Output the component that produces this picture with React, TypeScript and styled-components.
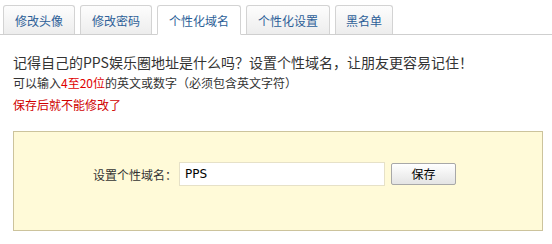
import React from "react";
import styled, { createGlobalStyle } from "styled-components";

const Global = createGlobalStyle`
  html, body { margin: 0; padding: 0; background: #fff; }
  body { font-family: "Noto Sans CJK SC", "Noto Sans", sans-serif; font-size: 12px; color: #333; }
`;

const Page = styled.div`
  width: 552px;
  height: 244px;
  overflow: hidden;
`;

const TabBar = styled.div`
  display: flex;
  align-items: flex-end;
  height: 34px;
  padding-left: 3px;
  border-bottom: 1px solid #cfcfcf;
`;

const Tab = styled.div<{ $active?: boolean; $pad?: number }>`
  box-sizing: border-box;
  height: ${(p) => (p.$active ? "30px" : "29px")};
  margin-right: 5px;
  margin-bottom: ${(p) => (p.$active ? "-1px" : "0")};
  padding: 1px ${(p) => p.$pad ?? 11}px 0;
  display: flex;
  align-items: center;
  border: 1px solid #d3d3d3;
  border-bottom: ${(p) => (p.$active ? "1px solid #fff" : "none")};
  border-radius: 3px 3px 0 0;
  background: ${(p) =>
    p.$active ? "#fff" : "linear-gradient(#fdfdfd, #ededed)"};
  color: #2d5f98;
  font-size: 12px;
  line-height: 14px;
  white-space: nowrap;
`;

const Content = styled.div`
  padding: 17px 0 0 13px;
`;

const Lead = styled.div`
  font-size: 14px;
  line-height: 20px;
  color: #333;
`;

const Hint = styled.div`
  margin-top: 1px;
  font-size: 12px;
  line-height: 20px;
  color: #333;
`;

const Red = styled.span`
  color: #e00000;
`;

const Warn = styled.div`
  margin-top: 2px;
  font-size: 12px;
  line-height: 20px;
  color: #d00000;
`;

const Panel = styled.div`
  box-sizing: border-box;
  margin-top: 16px;
  width: 530px;
  height: 100px;
  border: 1px solid #ccc39c;
  background: #fffad8;
  padding: 30px 0 0 79px;
`;

const Row = styled.div`
  display: flex;
  align-items: center;
`;

const Label = styled.label`
  font-size: 12px;
  color: #333;
  width: 86px;
  white-space: nowrap;
`;

const Input = styled.input`
  box-sizing: border-box;
  width: 206px;
  height: 24px;
  border: 1px solid #e6e1c8;
  background: #fff;
  padding: 0 5px;
  font-family: "DejaVu Sans", "Noto Sans", sans-serif;
  font-size: 12px;
  color: #000;
  outline: none;
`;

const Button = styled.button`
  box-sizing: border-box;
  margin-left: 6px;
  width: 65px;
  height: 22px;
  border: 1px solid #a8a8a8;
  border-radius: 2px;
  background: linear-gradient(#ffffff, #e4e4e4);
  font-family: "Noto Sans CJK SC", sans-serif;
  font-size: 12px;
  color: #000;
  padding: 0;
  line-height: 18px;
`;

export default function App() {
  return (
    <Page>
      <Global />
      <TabBar>
        <Tab>修改头像</Tab>
        <Tab>修改密码</Tab>
        <Tab $active>个性化域名</Tab>
        <Tab>个性化设置</Tab>
        <Tab $pad={10}>黑名单</Tab>
      </TabBar>
      <Content>
        <Lead>记得自己的PPS娱乐圈地址是什么吗？设置个性域名，让朋友更容易记住！</Lead>
        <Hint>
          可以输入<Red>4至20位</Red>的英文或数字（必须包含英文字符）
        </Hint>
        <Warn>保存后就不能修改了</Warn>
        <Panel>
          <Row>
            <Label>设置个性域名：</Label>
            <Input defaultValue="PPS" />
            <Button>保存</Button>
          </Row>
        </Panel>
      </Content>
    </Page>
  );
}
